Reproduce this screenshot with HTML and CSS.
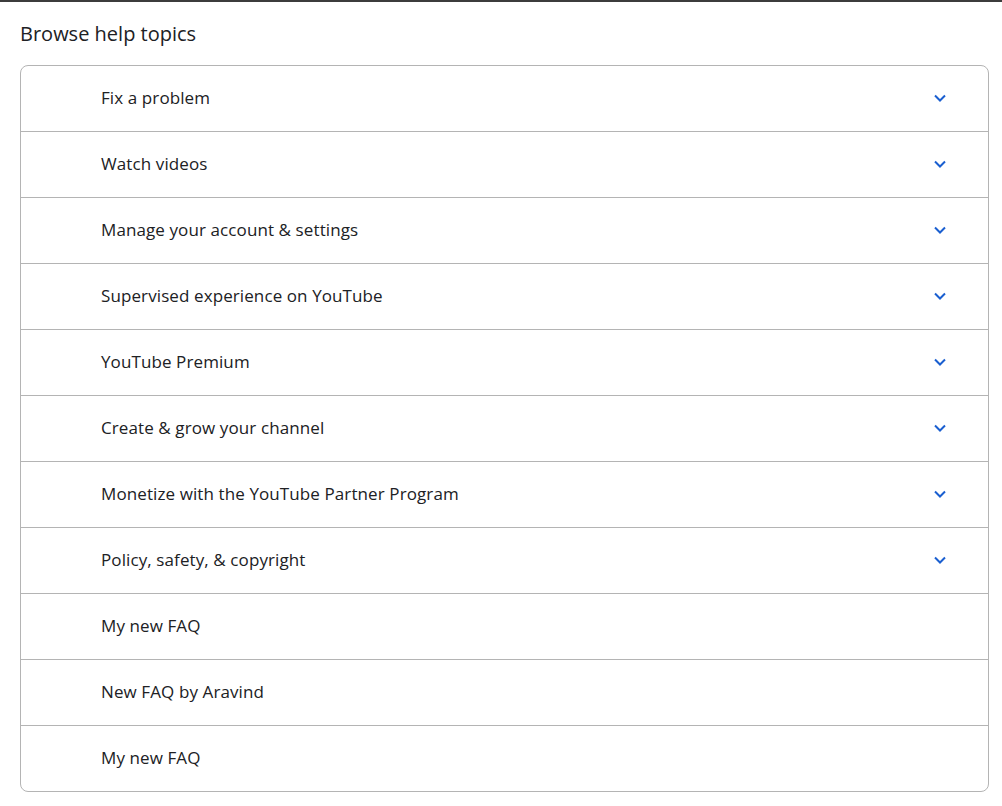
FILE: index.html
```html
<!DOCTYPE html>
<html>
<head>
<meta charset="utf-8">
<link rel="stylesheet" href="styles.css">
</head>
<body>
<div class="topbar"></div>
<main class="page">
  <h2 class="title">Browse help topics</h2>
  <div class="topics">
    <div class="row"><span class="label">Fix a problem</span><svg class="chev" viewBox="0 0 12 8"><path d="M1 1.5l5 5 5-5"/></svg></div>
    <div class="row"><span class="label">Watch videos</span><svg class="chev" viewBox="0 0 12 8"><path d="M1 1.5l5 5 5-5"/></svg></div>
    <div class="row"><span class="label">Manage your account &amp; settings</span><svg class="chev" viewBox="0 0 12 8"><path d="M1 1.5l5 5 5-5"/></svg></div>
    <div class="row"><span class="label">Supervised experience on YouTube</span><svg class="chev" viewBox="0 0 12 8"><path d="M1 1.5l5 5 5-5"/></svg></div>
    <div class="row"><span class="label">YouTube Premium</span><svg class="chev" viewBox="0 0 12 8"><path d="M1 1.5l5 5 5-5"/></svg></div>
    <div class="row"><span class="label">Create &amp; grow your channel</span><svg class="chev" viewBox="0 0 12 8"><path d="M1 1.5l5 5 5-5"/></svg></div>
    <div class="row"><span class="label">Monetize with the YouTube Partner Program</span><svg class="chev" viewBox="0 0 12 8"><path d="M1 1.5l5 5 5-5"/></svg></div>
    <div class="row"><span class="label">Policy, safety, &amp; copyright</span><svg class="chev" viewBox="0 0 12 8"><path d="M1 1.5l5 5 5-5"/></svg></div>
    <div class="row"><span class="label">My new FAQ</span></div>
    <div class="row"><span class="label">New FAQ by Aravind</span></div>
    <div class="row"><span class="label">My new FAQ</span></div>
  </div>
</main>
</body>
</html>
```

FILE: styles.css
```css
html, body {
  margin: 0;
  padding: 0;
  background: #fff;
}
body {
  font-family: "Open Sans", "Liberation Sans", sans-serif;
  color: #202124;
}
.topbar {
  height: 2px;
  background: #3c3c3c;
}
.page {
  padding: 0 13px 0 20px;
}
.title {
  margin: 0;
  padding-top: 19px;
  height: 44px;
  font-size: 20px;
  font-weight: 400;
  line-height: 26px;
}
.topics {
  border: 1px solid #b4b4b4;
  border-radius: 8px;
}
.row {
  display: flex;
  align-items: center;
  justify-content: space-between;
  height: 65px;
  padding: 0 42px 0 80px;
  border-top: 1px solid #b4b4b4;
}
.row:first-child {
  border-top: none;
}
.label {
  font-size: 17px;
  letter-spacing: 0.1px;
  margin-bottom: 2px;
}
.chev {
  width: 12px;
  height: 8px;
  margin-bottom: 2px;
  fill: none;
  stroke: #1a5fd0;
  stroke-width: 2;
}
```
